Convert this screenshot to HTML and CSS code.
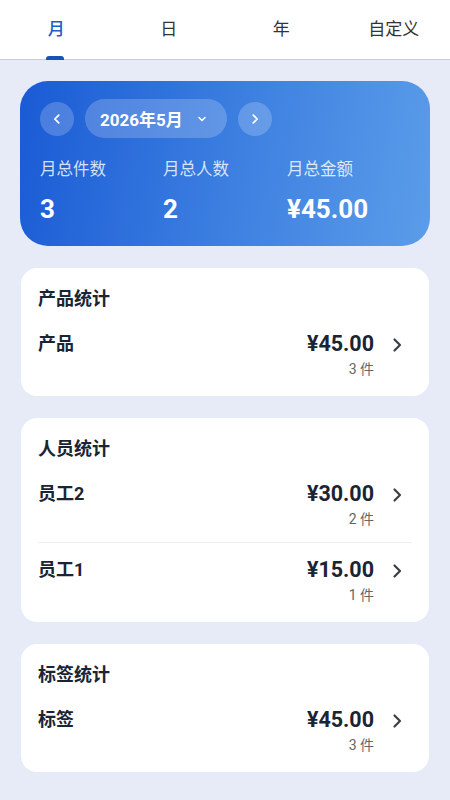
FILE: index.html
```html
<!DOCTYPE html>
<html lang="zh-CN">
<head>
<meta charset="utf-8">
<meta name="viewport" content="width=device-width, initial-scale=1">
<link rel="stylesheet" href="styles.css">
<title>统计</title>
</head>
<body>
<nav class="tabs">
  <div class="tab active">月<span class="indicator"></span></div>
  <div class="tab">日</div>
  <div class="tab">年</div>
  <div class="tab">自定义</div>
</nav>
<main class="content">
  <section class="hero">
    <div class="picker">
      <button class="circle" aria-label="上一月">
        <svg viewBox="0 0 16 16" width="14" height="14"><path d="M10 3.5 5.5 8 10 12.5" fill="none" stroke="#fff" stroke-width="2" stroke-linecap="round" stroke-linejoin="round"/></svg>
      </button>
      <button class="pill">2026年5月
        <svg viewBox="0 0 16 16" width="12" height="12"><path d="M4 6l4 4 4-4" fill="none" stroke="#fff" stroke-width="2" stroke-linecap="round" stroke-linejoin="round"/></svg>
      </button>
      <button class="circle" aria-label="下一月">
        <svg viewBox="0 0 16 16" width="14" height="14"><path d="M6 3.5 10.5 8 6 12.5" fill="none" stroke="#fff" stroke-width="2" stroke-linecap="round" stroke-linejoin="round"/></svg>
      </button>
    </div>
    <div class="summary">
      <div class="stat"><div class="stat-label">月总件数</div><div class="stat-value">3</div></div>
      <div class="stat"><div class="stat-label">月总人数</div><div class="stat-value">2</div></div>
      <div class="stat"><div class="stat-label">月总金额</div><div class="stat-value">¥45.00</div></div>
    </div>
  </section>

  <section class="card">
    <h2 class="card-title">产品统计</h2>
    <div class="row">
      <div class="row-name">产品</div>
      <div class="row-right">
        <div class="amounts"><div class="amount">¥45.00</div><div class="count">3 件</div></div>
        <svg class="chev" viewBox="0 0 16 16" width="16" height="16"><path d="M5.5 2.5 11 8l-5.5 5.5" fill="none" stroke="#3a3f47" stroke-width="2.2" stroke-linecap="round" stroke-linejoin="round"/></svg>
      </div>
    </div>
  </section>

  <section class="card">
    <h2 class="card-title">人员统计</h2>
    <div class="row">
      <div class="row-name">员工2</div>
      <div class="row-right">
        <div class="amounts"><div class="amount">¥30.00</div><div class="count">2 件</div></div>
        <svg class="chev" viewBox="0 0 16 16" width="16" height="16"><path d="M5.5 2.5 11 8l-5.5 5.5" fill="none" stroke="#3a3f47" stroke-width="2.2" stroke-linecap="round" stroke-linejoin="round"/></svg>
      </div>
    </div>
    <div class="row">
      <div class="row-name">员工1</div>
      <div class="row-right">
        <div class="amounts"><div class="amount">¥15.00</div><div class="count">1 件</div></div>
        <svg class="chev" viewBox="0 0 16 16" width="16" height="16"><path d="M5.5 2.5 11 8l-5.5 5.5" fill="none" stroke="#3a3f47" stroke-width="2.2" stroke-linecap="round" stroke-linejoin="round"/></svg>
      </div>
    </div>
  </section>

  <section class="card">
    <h2 class="card-title">标签统计</h2>
    <div class="row">
      <div class="row-name">标签</div>
      <div class="row-right">
        <div class="amounts"><div class="amount">¥45.00</div><div class="count">3 件</div></div>
        <svg class="chev" viewBox="0 0 16 16" width="16" height="16"><path d="M5.5 2.5 11 8l-5.5 5.5" fill="none" stroke="#3a3f47" stroke-width="2.2" stroke-linecap="round" stroke-linejoin="round"/></svg>
      </div>
    </div>
  </section>
</main>
</body>
</html>
```

FILE: styles.css
```css
* { box-sizing: border-box; }
html, body { margin: 0; padding: 0; }
body {
  font-family: Roboto, "Noto Sans CJK SC", sans-serif;
  background: #e6ebf7;
  color: #1b2433;
  width: 450px;
  min-height: 800px;
}
.tabs {
  display: grid;
  grid-template-columns: repeat(4, 1fr);
  height: 60px;
  background: #fff;
  border-bottom: 1px solid #c9ccd2;
}
.tab {
  position: relative;
  display: flex;
  align-items: center;
  justify-content: center;
  padding-bottom: 4px;
  font-size: 17px;
  color: #333;
}
.tab.active { color: #1b5cc6; font-weight: 500; }
.indicator {
  position: absolute;
  left: 50%;
  bottom: -1px;
  width: 18px;
  height: 4px;
  margin-left: -10px;
  background: #1553b8;
  border-radius: 3px 3px 0 0;
}
.content {
  padding: 21px 20px 30px;
  display: flex;
  flex-direction: column;
  gap: 22px;
}
.hero {
  border-radius: 28px;
  background: linear-gradient(100deg, #1a5ad5 0%, #3b7ee0 50%, #5b9de9 100%);
  padding: 18px 20px 22px;
  color: #fff;
}
.picker { display: flex; align-items: center; gap: 11px; height: 39px; }
.circle, .pill {
  border: 0;
  background: rgba(255,255,255,0.2);
  color: #fff;
  font-family: inherit;
  display: flex;
  align-items: center;
  justify-content: center;
  padding: 0;
}
.circle { width: 34px; height: 34px; border-radius: 50%; }
.pill {
  height: 39px;
  width: 142px;
  border-radius: 20px;
  padding: 0 19px 0 15px;
  justify-content: space-between;
  font-size: 17px;
  font-weight: 700;
}
.summary {
  display: grid;
  grid-template-columns: 123px 124px 1fr;
  margin-top: 21px;
}
.stat-label { font-size: 16.5px; line-height: 22px; color: rgba(255,255,255,0.82); }
.stat-value { font-size: 26px; line-height: 30px; font-weight: 700; margin-top: 13px; }
.card {
  background: #fff;
  border-radius: 16px;
  margin: 0 1px;
  padding: 18px 17px 4px;
}
.card-title {
  margin: 0 0 7px;
  font-size: 18px;
  line-height: 26px;
  font-weight: 700;
}
.row {
  display: flex;
  justify-content: space-between;
  align-items: flex-start;
  padding: 13px 7px 13px 0;
}
.row + .row { border-top: 1px solid #eceef1; padding-top: 15px; }
.row-name { font-size: 18px; line-height: 24px; font-weight: 700; }
.row-right { display: flex; align-items: flex-start; gap: 15px; }
.amounts { text-align: right; }
.amount { font-size: 21.5px; line-height: 24px; font-weight: 700; }
.count { font-size: 14px; line-height: 20px; color: #666; margin-top: 3px; }
.chev { margin-top: 5px; }
```
